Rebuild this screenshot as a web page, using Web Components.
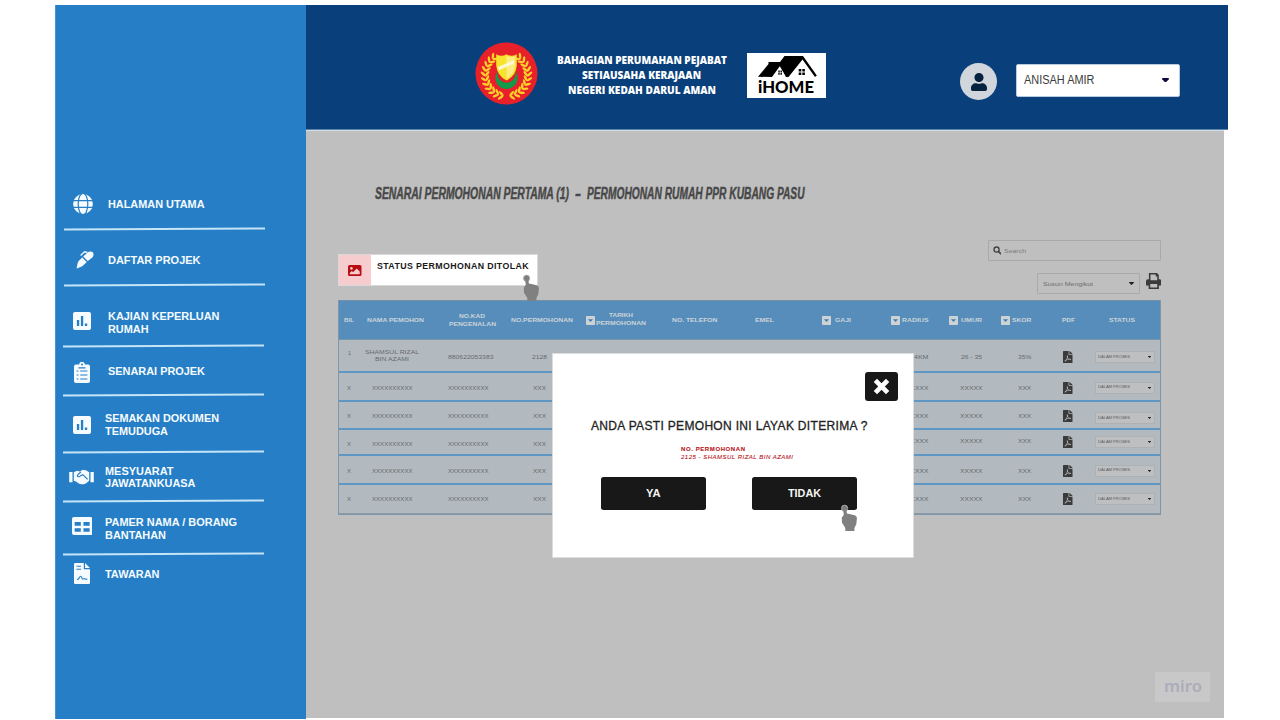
<!DOCTYPE html>
<html lang="ms">
<head>
<meta charset="utf-8">
<title>iHOME</title>
<style>
html,body{margin:0;padding:0;background:#fff;width:1280px;height:720px;overflow:hidden;font-family:"Liberation Sans",Arial,sans-serif}
</style>
</head>
<body>
<ihome-app></ihome-app>
<script>
const define = (name, html, setup) => customElements.define(name, class extends HTMLElement {
  connectedCallback() {
    if (this.shadowRoot) return;
    const root = this.attachShadow({mode: 'open'});
    root.innerHTML = typeof html === 'function' ? html(this) : html;
    if (setup) setup(this, root);
  }
});

/* ---------- icons ---------- */
const pdfPath = 'M181.9 256.1c-5-16-4.9-46.9-2-46.9 8.4 0 7.6 36.9 2 46.9zm-1.7 47.2c-7.7 20.2-17.3 43.3-28.4 62.7 18.3-7 39-17.2 62.9-21.9-12.7-9.6-24.9-23.4-34.5-40.8zM86.1 428.1c0 .8 13.2-5.4 34.9-40.2-6.7 6.3-29.1 24.5-34.9 40.2zM248 160h136v328c0 13.3-10.7 24-24 24H24c-13.3 0-24-10.7-24-24V24C0 10.7 10.7 0 24 0h200v136c0 13.2 10.8 24 24 24zm-8 171.8c-20-12.2-33.3-29-42.7-53.8 4.5-18.5 11.6-46.6 6.2-64.2-4.7-29.4-42.4-26.5-47.8-6.8-5 18.3-.4 44.1 8.1 77-11.6 27.6-28.7 64.6-40.8 85.8-.1 0-.1.1-.2.1-27.1 13.9-73.6 44.5-54.5 68 5.6 6.9 16 10 21.5 10 17.9 0 35.7-18 61.1-61.8 25.8-8.5 54.1-19.1 79-23.2 21.7 11.8 47.1 19.5 64 19.5 29.2 0 31.2-32 19.7-43.4-13.9-13.6-54.3-9.7-73.6-7.2zM377 105L279 7c-4.5-4.5-10.6-7-17-7h-6v128h128v-6.1c0-6.3-2.5-12.4-7-16.9z';
const userPath = 'M224 256c70.7 0 128-57.3 128-128S294.7 0 224 0 96 57.3 96 128s57.3 128 128 128zm89.6 32h-16.7c-22.2 10.2-46.9 16-72.9 16s-50.6-5.8-72.9-16h-16.7C60.2 288 0 348.2 0 422.4V464c0 26.5 21.5 48 48 48h352c26.5 0 48-21.5 48-48v-41.6c0-74.2-60.2-134.4-134.4-134.4z';
const ICONS = {
  globe: ['0 0 20 20', '<circle cx="10" cy="10" r="9.9" fill="currentColor"/><g fill="none" stroke="#267fc6" stroke-width="1.200"><ellipse cx="10" cy="10" rx="4.8" ry="10.8"/><path d="M0 6.7h20M0 13.3h20"/></g>'],
  pen: ['0 0 18 18', '<path fill="currentColor" d="M.6 17.4 1.6 12.2C2 11 2.6 10.2 3.4 9.3L6.3 6.4 10.8 10.9 7.6 14C6.4 15.2 4.8 16.3.6 17.4ZM7.2 5.5 11.6 1.5C13 .3 15.2 0 16.8 1.2 18 3 17.6 5.2 16.4 6.5L11.8 10.1Z"/><path d="M4.6 4.4 8.6.8 11.4 1.4" fill="none" stroke="currentColor" stroke-width="1.3"/>'],
  chart: ['0 0 18 18', '<rect width="18" height="18" rx="2" fill="currentColor"/><path fill="#267fc6" d="M3.9 8.1h2.3v6H3.9zM7.9 4h2.3v10.1H7.9zM11.900 11.500h2.300v2.600h-2.300z"/>'],
  clip: ['0 0 16 21', '<path fill="currentColor" d="M2 2.600h3.200a2.800 2.800 0 0 1 5.600 0H14a2 2 0 0 1 2 2V19a2 2 0 0 1-2 2H2a2 2 0 0 1-2-2V4.600a2 2 0 0 1 2-2z"/><circle cx="8" cy="2.600" r="1" fill="#267fc6"/><path stroke="#267fc6" stroke-width="1.100" d="M2.600 9h1.800M2.600 13h1.800M2.600 17h1.800M6.200 9h7.200M6.200 13h7.200M6.200 17h7.200M4.500 5.900h7"/>'],
  shake: ['0 0 25 17', '<path fill="currentColor" d="M.2 3.200H3.500V14H.2zM21.500 3.200h3.300V14h-3.300zM4.800 3.400 8 1.800 11 2.600 13.600.8 17.400 1.600 20.200 3.400V12.600C19.400 13.200 18.600 14.200 17.600 14.800 16.500 15.800 15 16.200 12.800 16.200 10.800 16.400 9 15.200 7.600 13.600L4.800 12.400Z"/><path d="M11.800 3.200 8.400 6.600C8.200 8.600 10.400 8.800 11.600 7.200L13.800 6 18.600 11" fill="none" stroke="#267fc6" stroke-width="1.200"/>'],
  table: ['0 0 20 18', '<rect width="20" height="18" rx="2" fill="currentColor"/><path fill="#267fc6" d="M2.600 5h6v3.700h-6zM11.200 5h6v3.700h-6zM2.600 11.200h6v3.500h-6zM11.200 11.200h6v3.500h-6z"/>'],
  contract: ['0 0 16 21', '<path fill="currentColor" d="M1.200 0H9.800V6.200H16V19.800a1.200 1.200 0 0 1-1.200 1.200H1.200A1.200 1.200 0 0 1 0 19.800V1.200A1.200 1.200 0 0 1 1.200 0zM11 0 16 5H11z"/><path d="M2.500 3.300h4.500M2.500 6.300h4.500M3 16.500C5 17 5.400 13.200 6.600 13.200 7.800 13.200 7.600 16.200 8.800 16.200 9.600 16.200 9.700 15.200 10.400 15.800L13.300 16.400" fill="none" stroke="#267fc6" stroke-width="1.100"/>'],
  pdf: ['0 0 384 512', `<path fill="currentColor" d="${pdfPath}"/>`],
  user: ['0 0 448 512', `<path fill="currentColor" d="${userPath}"/>`],
  search: ['0 0 10 10', '<circle cx="4.200" cy="4.200" r="3" fill="none" stroke="currentColor" stroke-width="1.600"/><path d="m6.500 6.500 2.600 2.600" stroke="currentColor" stroke-width="2" stroke-linecap="round"/>'],
  print: ['0 0 16 16', '<path fill="currentColor" fill-rule="evenodd" d="M3 0h8.400L13.200 1.900V6.200h.8a2 2 0 0 1 2 2v4.200H13.300V16H2.700V12.400H0V8.200a2 2 0 0 1 2-2h1zM4.600 1.600v5.600h7V3.600H10V1.600zM4.400 10.900v3.500h7.200v-3.500z"/>'],
  image: ['0 0 14 11', '<rect width="14" height="11" rx="1.600" fill="currentColor"/><circle cx="3.600" cy="3.400" r="1.300" fill="#f7cccf"/><path fill="#f7cccf" d="M1.800 9.300V8L4 6 5.200 7.200 9 3.400 12.200 6.600V9.300z"/>'],
  drop: ['0 0 9 9', '<rect width="9" height="9" rx=".8" fill="#cdd2d5"/><path fill="#3f7db0" d="M1.900 3.300h5.200L4.500 6.100z"/>'],
  caret: ['0 0 8 5', '<path fill="currentColor" d="M.8 0h6.400a.8.8 0 0 1 .6 1.300L4.600 4.600a.9.900 0 0 1-1.200 0L.2 1.300A.8.800 0 0 1 .8 0z"/>'],
  close: ['0 0 18 18', '<path stroke="currentColor" stroke-width="5" stroke-linecap="square" d="m4.300 4.300 9.400 9.400M13.700 4.300l-9.400 9.400"/>'],
  hand: ['0 0 20 27', '<circle cx="4.600" cy="4.300" r="3.200" fill="#999" stroke="#aaa" stroke-width=".6"/><circle cx="4.600" cy="4.300" r="1.700" fill="none" stroke="#555" stroke-width=".8"/><path fill="#808080" d="M3.200 4.600a1.400 1.400 0 0 1 2.900 0L6.900 9.600 10.500 10.200 14.600 11.300C16.300 11.900 17 13 16.900 14.500L16.300 20.200 14.400 24V27H5.300V24L2 18.800 1.800 13.500 3.700 11z"/>']
};
define('i-con', el => { const [vb, body] = ICONS[el.getAttribute('n')];
  return `<style>:host{display:block;flex:none;width:${el.getAttribute('w')}px;height:${el.getAttribute('h')}px}svg{display:block;width:100%;height:100%}</style><svg viewBox="${vb}" preserveAspectRatio="none">${body}</svg>`; });

/* ---------- sidebar ---------- */
define('nav-item', el => { const a = k => el.getAttribute(k);
  return `<style>:host{display:block;box-sizing:border-box;height:${a('h')}px;color:#f6fbff;font:bold 11px/12.6px "Liberation Sans",sans-serif}
  .r{display:flex;box-sizing:border-box;height:100%;padding-left:${a('ix')}px}
  i-con{margin-top:${a('iy')}px}.t{margin:${a('ty')}px 0 0 auto;width:${a('tw')}px}
  .l{height:1.6px;width:201px;margin:-1px 0 0 ${a('lx')||8.5}px;background:#c5e4f6;transform:rotate(-.28deg)}</style>
  <div class="r"><i-con n="${a('icon')}" w="${a('iw')}" h="${a('ih')}"></i-con><div class="t"><slot></slot></div></div>${el.hasAttribute('last') ? '' : '<div class="l"></div>'}`; });
define('side-bar', `<style>:host{display:block;flex:none;box-sizing:border-box;width:251px;height:714px;padding-top:174px;background:#267fc6;box-shadow:inset 1px 0 #4a94d0}</style>
<nav>
<nav-item h="50" icon="globe" ix="17.500" iy="15" iw="20" ih="20" ty="19" tw="198.500"><fit-line w="96.500">HALAMAN UTAMA</fit-line></nav-item>
<nav-item h="56" icon="pen" ix="20.500" iy="22" iw="18" ih="18" ty="25" tw="198.500"><fit-line w="92.500">DAFTAR PROJEK</fit-line></nav-item>
<nav-item h="60.500" icon="chart" ix="17.500" iy="26.500" iw="18" ih="18" ty="25" tw="198.500" lx="7.500"><fit-line w="111.500">KAJIAN KEPERLUAN</fit-line><fit-line w="40.500">RUMAH</fit-line></nav-item>
<nav-item h="49.500" icon="clip" ix="18.500" iy="16.500" iw="16" ih="21" ty="19.500" tw="198" lx="7.500"><fit-line w="97">SENARAI PROJEK</fit-line></nav-item>
<nav-item h="56.500" icon="chart" ix="17.500" iy="21" iw="18" ih="18" ty="17" tw="201" lx="7.500"><fit-line w="114">SEMAKAN DOKUMEN</fit-line><fit-line w="63">TEMUDUGA</fit-line></nav-item>
<nav-item h="49" icon="shake" ix="14" iy="17.500" iw="25" ih="16" ty="13" tw="201.500" lx="7.500"><fit-line w="68.500">MESYUARAT</fit-line><fit-line w="90.500">JAWATANKUASA</fit-line></nav-item>
<nav-item h="53" icon="table" ix="16.500" iy="16.500" iw="20.500" ih="18" ty="15.500" tw="201.500" lx="7.500"><fit-line w="132">PAMER NAMA / BORANG</fit-line><fit-line w="61">BANTAHAN</fit-line></nav-item>
<nav-item h="50" icon="contract" ix="19" iy="9" iw="16" ih="21" ty="14" tw="201.500" last><fit-line w="54.500">TAWARAN</fit-line></nav-item>
</nav>`);

/* ---------- header ---------- */
const wreath = () => { let s = '';
  for (const side of [-1, 1])
    for (let i = 0; i < 11; i++) {
      const deg = 99 + i * 13, a = deg * Math.PI / 180, r = 21.2;
      for (const o of [-1, 1])
        s += `<g transform="scale(${side},1) translate(${-Math.cos(a) * r} ${Math.sin(a) * r + 1.5}) rotate(${90 - deg + o * 42})"><ellipse cx="3" cy="0" rx="3.200" ry="1.250"/></g>`;
    }
  return s; };
define('state-crest', () => `<style>:host{display:block;flex:none;width:63px;height:63px}svg{display:block}</style>
<svg width="63" height="63" viewBox="-31.500 -31.500 63 63"><circle r="31" fill="#e8202a"/><g fill="#fbd02a">${wreath()}</g>
<circle cy="4.400" r="11" fill="#119a49"/><circle cy="0" r="9.200" fill="#e8202a"/>
<path d="M-10.300-19.300Q-5-16.200 0-19.300 5-16.200 10.300-19.300V-8Q9.500 2 0 7-9.500 2-10.300-8z" fill="#f7e32c"/><path d="M0-17.500Q4-15.500 8.600-17.200V-8Q7.800.5 0 5.300z" fill="#fdf0a0" opacity=".75"/><path d="m-8.500-6.500 16-7v3.500l-15 7z" fill="#fff8cf"/></svg>`);
define('ihome-logo', `<style>:host{display:block;flex:none;box-sizing:border-box;width:79px;height:45px;background:#fff;color:#000;padding-left:11px;font:900 17.500px/18px Lato,sans-serif}svg{display:block;margin-left:-.5px}fit-line{margin-top:-2px}</style>
<svg width="60" height="27" viewBox="0 0 60 27"><path d="M0 23.800 10.500 11V9H22L26.500 3H45L58.800 22.500 57 24 44.500 6.500 30.500 24H28L21.800 13.300 14 24z"/><path d="m22 14.300 5.200 8.700H16.500z" fill="#fff"/><path d="M20.300 17.400h1.400v2h-1.400zM22.500 17.400h1.400v2h-1.400zM20.300 20h1.400v1.800h-1.400zM22.500 20h1.400v1.800h-1.400zM40.700 16h2.600v2.600h-2.600zM44.300 16h2.600v2.600h-2.600zM40.700 19.500h2.600v2.600h-2.600zM44.300 19.500h2.600v2.600h-2.600z"/></svg><fit-line w="56">iHOME</fit-line>`);
define('user-select', `<style>:host{display:flex;flex:none;box-sizing:border-box;width:164px;height:33px;background:#fff;border:1px solid #b9cbe0;border-radius:2px;align-items:center;justify-content:space-between;padding:0 10px 0 7.500px;color:#3b3b3b;font-size:12px}</style><fit-line w="70.500"><slot></slot></fit-line><i-con n="caret" w="7" h="4.500" style="color:#0a0a3c"></i-con>`);
define('top-bar', `<style>:host{display:flex;flex:none;box-sizing:border-box;width:922px;height:125px;background:#09407c;border-bottom:1px solid #5a83ae;padding-left:169px}
state-crest{margin-top:37px}.n{width:171px;margin:48px 0 0 18px;display:flex;flex-direction:column;align-items:center;color:#fff;font:800 11px/14.800px "Open Sans",sans-serif}
ihome-logo{margin:48px 0 0 20px}.a{flex:none;width:37px;height:37px;border-radius:50%;background:#d0d6dc;margin:58px 0 0 134px;display:flex;align-items:center;justify-content:center;color:#05233f}user-select{margin:58.500px 0 0 18.500px}</style>
<state-crest></state-crest><div class="n"><fit-line w="170">BAHAGIAN PERUMAHAN PEJABAT</fit-line><fit-line w="119">SETIAUSAHA KERAJAAN</fit-line><fit-line w="148">NEGERI KEDAH DARUL AMAN</fit-line></div><ihome-logo></ihome-logo><div class="a"><i-con n="user" w="16" h="18"></i-con></div><user-select>ANISAH AMIR</user-select>`);

/* ---------- main area ---------- */
define('status-toast', `<style>:host{display:flex;flex:none;box-sizing:border-box;width:200px;height:32px;background:#fff;border:.5px solid #d9d9d9;color:#1a1a1a;font:bold 8.800px/12px "Liberation Sans",sans-serif}.i{width:32px;background:#f7cccf;color:#b90d14;display:flex;justify-content:center;align-items:center}fit-line{margin:5px 0 0 6px}</style><div class="i"><i-con n="image" w="13.500" h="11"></i-con></div><fit-line w="151.500" ls><slot></slot></fit-line>`);
define('search-box', `<style>:host{display:flex;box-sizing:border-box;width:173.500px;height:21px;border:1px solid #a9a9a9;border-radius:1px;align-items:center;padding-left:4px;color:#7b7b7b;font-size:6.200px}i-con{color:#444;margin-right:3px}fit-line{margin-top:-1px}</style><i-con n="search" w="8.500" h="8.500"></i-con><fit-line w="22"><slot></slot></fit-line>`);
define('sort-box', `<style>:host{display:flex;box-sizing:border-box;width:103px;height:21px;border:1px solid #a9a9a9;border-radius:1px;align-items:center;justify-content:space-between;padding:0 5px 0 4.500px;color:#6d6d6d;font-size:6.200px}fit-line{margin-top:-1px}</style><fit-line w="50"><slot></slot></fit-line><i-con n="caret" w="5" h="3" style="color:#222"></i-con>`);
define('status-box', `<style>:host{display:flex;flex:none;box-sizing:border-box;width:60px;height:12px;background:#bdbfc1;border:1px solid #aeb1b4;align-items:center;justify-content:space-between;padding:0 3px 0 2px;color:#5c5c5c;font-size:3.800px}</style><fit-line w="32"><slot></slot></fit-line><i-con n="caret" w="3" h="2" style="color:#222"></i-con>`);
const COLS = 'grid-template-columns:20px 73px 80px 60px 83px 80px 58px 87px 60px 50px 52px 52px 67px;';
define('table-row', el => { const v = (k, d) => el.getAttribute(k) || d;
  const [name, kad, no, rad, um, sk] = v('cells').split('|');
  const [tb, tl, tr, ti, ts] = v('tops').split(',');
  const nm = name.split('/').map((x, i) => `<fit-line w="${name.includes('/') ? [54, 34][i] : 40.500}">${x}</fit-line>`).join('');
  const c = (t, content, w, pl = 0, ml = 0) => `<div class="c" style="padding-top:${t}px;padding-left:${pl}px;margin-left:${ml}px">${w ? `<fit-line w="${w}">${content}</fit-line>` : content}</div>`;
  return `<style>:host{display:grid;${COLS}box-sizing:border-box;height:${v('h')}px;border-bottom:${el.hasAttribute('last') ? '1px solid #8d9aa5' : '2px solid #5f97c4'};color:#666a6d;font:6px/7px "Liberation Sans",sans-serif}
  .c{display:flex;flex-direction:column;align-items:center;box-sizing:border-box;min-width:0;height:0}</style>`
  + c(tb, v('b'), v('b') === '1' ? 3 : 4) + c(name.includes('/') ? 9 : tl, nm, 0, 0, -7)
  + c(tl, kad, kad.startsWith('8') ? 45.500 : 40.500, 0, kad.startsWith('8') ? -2 : -7) + c(tl, no, no.startsWith('2') ? 15 : 13, 0, -6)
  + '<div></div><div></div><div></div><div></div>'
  + c(tr, rad, rad.startsWith('4') ? 14.500 : 22.500, rad.startsWith('4') ? 22 : 14) + c(tr, um, um.startsWith('2') ? 21 : 22.500, 12) + c(tr, sk, 13.300, 17)
  + c(ti, '<i-con n="pdf" w="9.500" h="12" style="color:#3b3b3b"></i-con>', 0) + c(ts, '<status-box>DALAM PROSES</status-box>', 0, 0, -5); });
define('data-table', `<style>:host{display:block;box-sizing:border-box;width:823px;border:1px solid #7d97ab;border-top-color:#7292ac;background:#b3babf}
.h{display:grid;${COLS}height:38px;background:#568dba;border-bottom:1px solid #7794a8;align-items:center;color:#cbd3d9;font:bold 6.200px/8px "Liberation Sans",sans-serif}
.h>div{display:flex;align-items:center;justify-content:center}.k{flex-direction:column}</style>
<div class="h"><div><fit-line w="10">BIL</fit-line></div><div><fit-line w="57">NAMA PEMOHON</fit-line></div><div class="k"><fit-line w="26">NO.KAD</fit-line><fit-line w="47">PENGENALAN</fit-line></div><div><fit-line w="62">NO.PERMOHONAN</fit-line></div>
<div style="padding-left:4px"><i-con n="drop" w="9" h="9"></i-con><div style="margin:-2px 0 0 1px;display:flex;flex-direction:column;align-items:center"><fit-line w="24">TARIKH</fit-line><fit-line w="50">PERMOHONAN</fit-line></div></div>
<div><fit-line w="45.500">NO. TELEFON</fit-line></div><div><fit-line w="19">EMEL</fit-line></div>
<div style="gap:4px"><i-con n="drop" w="9" h="9"></i-con><fit-line w="16">GAJI</fit-line></div><div style="gap:2px"><i-con n="drop" w="9" h="9"></i-con><fit-line w="26.500">RADIUS</fit-line></div><div style="gap:3px"><i-con n="drop" w="9" h="9"></i-con><fit-line w="21">UMUR</fit-line></div><div style="gap:1.500px"><i-con n="drop" w="9" h="9"></i-con><fit-line w="19.500">SKOR</fit-line></div><div><fit-line w="13">PDF</fit-line></div><div style="padding-right:11px"><fit-line w="26">STATUS</fit-line></div></div>
<table-row h="33" b="1" cells="SHAMSUL RIZAL/BIN AZAMI|880622053383|2128|4KM|26 - 35|35%" tops="10,13.500,13.500,11,11"></table-row>
<table-row h="29" b="X" cells="XXXXXXXXXX|XXXXXXXXXX|XXX|XXXXX|XXXXX|XXX" tops="11.500,11.500,11.500,8.500,8.500"></table-row>
<table-row h="28" b="X" cells="XXXXXXXXXX|XXXXXXXXXX|XXX|XXXXX|XXXXX|XXX" tops="11,11,11,8,10"></table-row>
<table-row h="25.500" b="X" cells="XXXXXXXXXX|XXXXXXXXXX|XXX|XXXXX|XXXXX|XXX" tops="10.500,10.500,8,5.500,6"></table-row>
<table-row h="29" b="X" cells="XXXXXXXXXX|XXXXXXXXXX|XXX|XXXXX|XXXXX|XXX" tops="12.500,12.500,12.500,9.500,9"></table-row>
<table-row h="29" b="X" cells="XXXXXXXXXX|XXXXXXXXXX|XXX|XXXXX|XXXXX|XXX" tops="11.500,11.500,11.500,8.500,8.500" last></table-row>`);
define('miro-mark', `<style>:host{display:flex;width:55px;height:30px;background:#c8c8c8;align-items:center;justify-content:center;color:#acacba;font:600 16px/17px "Noto Sans",sans-serif}fit-line{margin-top:-2px}</style><fit-line w="38">miro</fit-line>`);
define('page-main', `<style>:host{display:flex;flex-direction:column;box-sizing:border-box;width:918px;height:588px;background:#bfbfbf;border-top:1px solid #d5dde5;padding:0 0 0 32px}
h1{display:flex;margin:51px 0 0 37px;font:italic bold 16px/24px "Liberation Sans",sans-serif;color:#484848;-webkit-text-stroke:.45px #484848}h1 fit-line+fit-line{margin-left:6px}
.t{display:flex;justify-content:space-between;align-items:flex-start;width:823px;height:61px;margin-top:34px}status-toast{margin-top:14px}.r{display:flex;flex-direction:column;align-items:flex-end}.s{display:flex;gap:5.500px;margin-top:12px}data-table{margin-top:-1px}miro-mark{margin:auto 14px 16px auto}</style>
<h1><fit-line w="194">SENARAI PERMOHONAN PERTAMA (1)</fit-line><fit-line w="6">-</fit-line><fit-line w="217.500">PERMOHONAN RUMAH PPR KUBANG PASU</fit-line></h1>
<div class="t"><status-toast>STATUS PERMOHONAN DITOLAK</status-toast><div class="r"><search-box>Search</search-box><div class="s"><sort-box>Susun Mengikut</sort-box><i-con n="print" w="15.500" h="16" style="color:#3b3b3b"></i-con></div></div></div>
<data-table></data-table><miro-mark></miro-mark>`);

/* ---------- dialog ---------- */
define('action-button', `<style>:host{display:flex;box-sizing:border-box;width:105px;height:33px;border-radius:2.500px;background:#181818;color:#f5f5f5;align-items:center;justify-content:center;font:bold 11.500px/14px "Liberation Sans",sans-serif}</style><slot></slot>`);
define('confirm-dialog', `<style>:host{display:flex;flex-direction:column;box-sizing:border-box;width:362px;height:205px;background:#fff;border:1px solid #dcdcdc}
.x{width:33px;height:29px;border-radius:3px;background:#181818;color:#fff;display:flex;align-items:center;justify-content:center;margin:18px 15px 0 auto}
.q{margin:17px 0 0 38.500px;font:12px/16px "Liberation Sans",sans-serif;color:#222;-webkit-text-stroke:.3px #222}.n{margin:12px 0 0 128.500px;color:#b8141c;font:6px/7.500px "Liberation Sans",sans-serif;-webkit-text-stroke:.1px #b8141c}.b{display:flex;gap:46px;margin:15.500px 0 0 48px}</style>
<div class="x"><i-con n="close" w="17" h="17"></i-con></div><div class="q"><fit-line w="276.500" ls>ANDA PASTI PEMOHON INI LAYAK DITERIMA ?</fit-line></div>
<div class="n"><b><fit-line w="64" ls>NO. PERMOHONAN</fit-line></b><i><fit-line w="112" ls>2125 - SHAMSUL RIZAL BIN AZAMI</fit-line></i></div>
<div class="b"><action-button><fit-line w="14.500">YA</fit-line></action-button><action-button><fit-line w="33">TIDAK</fit-line></action-button></div>`);

define('ihome-app', `<style>:host{display:flex;position:relative;box-sizing:border-box;width:1280px;height:720px;padding:5px 0 0 55px;background:#fff}confirm-dialog{position:absolute;left:551.500px;top:353px}.h1,.h2{position:absolute}.h1{left:522px;top:274px}.h2{left:839.500px;top:504px}</style>
<side-bar></side-bar><div><top-bar></top-bar><page-main></page-main></div><i-con class="h1" n="hand" w="20" h="27"></i-con><confirm-dialog></confirm-dialog><i-con class="h2" n="hand" w="20" h="27"></i-con>`);

/* One line of text set to a given width: tracked when "ls" is present, otherwise condensed or expanded. */
define('fit-line', '<style>:host{display:block;flex:none;white-space:nowrap}span{display:inline-block;transform-origin:0 50%;vertical-align:top}</style><span><slot></slot></span>', (el, root) => {
  const w = +el.getAttribute('w'), s = root.querySelector('span');
  el.style.width = w + 'px';
  requestAnimationFrame(() => {
    const n = s.getBoundingClientRect().width;
    if (!n) return;
    if (el.hasAttribute('ls')) {
      const slot = el.querySelector('slot');
      const text = slot ? slot.assignedNodes().map(x => x.textContent).join('') : el.textContent;
      s.style.letterSpacing = (w - n) / (text.length - 1) + 'px';
    } else s.style.transform = `scaleX(${w / n})`;
  });
});
</script>
</body>
</html>
